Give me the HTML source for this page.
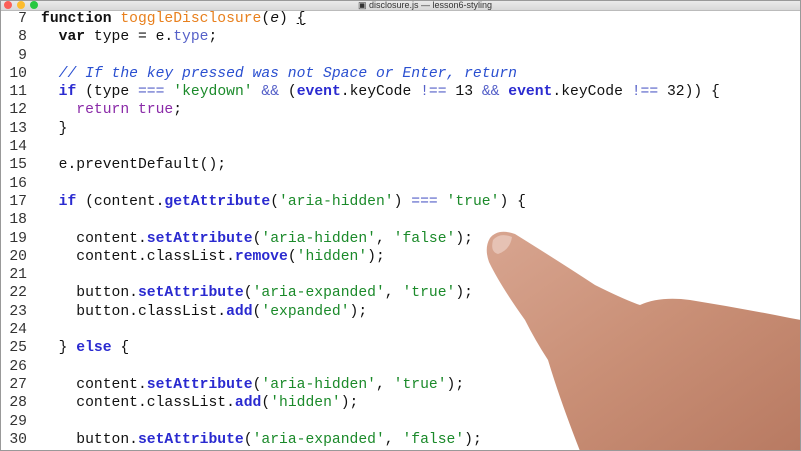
<!DOCTYPE html>
<html><head><style>
body{margin:0;width:801px;height:451px;overflow:hidden;background:#fff;position:relative;font-family:"Liberation Mono",monospace}
.bar{position:absolute;left:0;top:0;width:801px;height:10px;background:linear-gradient(#ececec,#d8d8d8);border-bottom:1px solid #bbb}
.dot{position:absolute;top:1px;width:8px;height:8px;border-radius:50%}
.title{position:absolute;left:358px;top:0;font:9px "Liberation Sans",sans-serif;color:#333;line-height:10px}
.code{position:absolute;left:0;top:10px;font-size:14.7px;line-height:18.3px;color:#111;white-space:pre}
.ln{display:inline-block;width:27px;text-align:right;color:#333;margin-right:14px}
.k{font-weight:bold}.f{color:#e8801e}.p{color:#5560c8}.s{color:#1b8a2a}.c{color:#2a4fd0;font-style:italic}.m{color:#2a2ad0;font-weight:bold}.t{color:#8a2aa8}
.frame{position:absolute;inset:0;border:1px solid #999;pointer-events:none}
</style></head><body>
<div class="bar"><div class="dot" style="left:4px;background:#fc5f57"></div><div class="dot" style="left:17px;background:#fdbc2e"></div><div class="dot" style="left:30px;background:#28c840"></div><div class="title">▣ disclosure.js — lesson6-styling</div></div>
<div class="code"><span class="ln">7</span><span class="k">function</span> <span class="f">toggleDisclosure</span>(<i>e</i>) <u>{</u>
<span class="ln">8</span>  <span class="k">var</span> type = e.<span class="p">type</span>;
<span class="ln">9</span>
<span class="ln">10</span>  <span class="c">// If the key pressed was not Space or Enter, return</span>
<span class="ln">11</span>  <span class="m">if</span> (type <span class="p">===</span> <span class="s">'keydown'</span> <span class="p">&amp;&amp;</span> (<span class="m">event</span>.keyCode <span class="p">!==</span> 13 <span class="p">&amp;&amp;</span> <span class="m">event</span>.keyCode <span class="p">!==</span> 32)) {
<span class="ln">12</span>    <span class="t">return true</span>;
<span class="ln">13</span>  }
<span class="ln">14</span>
<span class="ln">15</span>  e.preventDefault();
<span class="ln">16</span>
<span class="ln">17</span>  <span class="m">if</span> (content.<span class="m">getAttribute</span>(<span class="s">'aria-hidden'</span>) <span class="p">===</span> <span class="s">'true'</span>) {
<span class="ln">18</span>
<span class="ln">19</span>    content.<span class="m">setAttribute</span>(<span class="s">'aria-hidden'</span>, <span class="s">'false'</span>);
<span class="ln">20</span>    content.classList.<span class="m">remove</span>(<span class="s">'hidden'</span>);
<span class="ln">21</span>
<span class="ln">22</span>    button.<span class="m">setAttribute</span>(<span class="s">'aria-expanded'</span>, <span class="s">'true'</span>);
<span class="ln">23</span>    button.classList.<span class="m">add</span>(<span class="s">'expanded'</span>);
<span class="ln">24</span>
<span class="ln">25</span>  } <span class="m">else</span> {
<span class="ln">26</span>
<span class="ln">27</span>    content.<span class="m">setAttribute</span>(<span class="s">'aria-hidden'</span>, <span class="s">'true'</span>);
<span class="ln">28</span>    content.classList.<span class="m">add</span>(<span class="s">'hidden'</span>);
<span class="ln">29</span>
<span class="ln">30</span>    button.<span class="m">setAttribute</span>(<span class="s">'aria-expanded'</span>, <span class="s">'false'</span>);</div>
<svg style="position:absolute;left:0;top:0" width="801" height="451">
<defs><linearGradient id="g" x1="0" y1="0" x2="1" y2="1"><stop offset="0" stop-color="#d8a590"/><stop offset="0.5" stop-color="#c98f76"/><stop offset="1" stop-color="#b87a62"/></linearGradient></defs>
<path d="M490,238 Q498,228 515,234 Q560,262 595,285 Q625,300 640,305 Q660,296 690,300 Q740,308 790,318 L801,320 L801,451 L580,451 Q560,400 548,360 Q535,340 525,320 Q500,285 489,262 Q484,248 490,238Z" fill="url(#g)"/>
<path d="M493,240 Q500,232 512,237 Q510,250 498,254 Q490,252 493,240Z" fill="#e6c2b4"/>
</svg>
<div class="frame"></div>
</body></html>
